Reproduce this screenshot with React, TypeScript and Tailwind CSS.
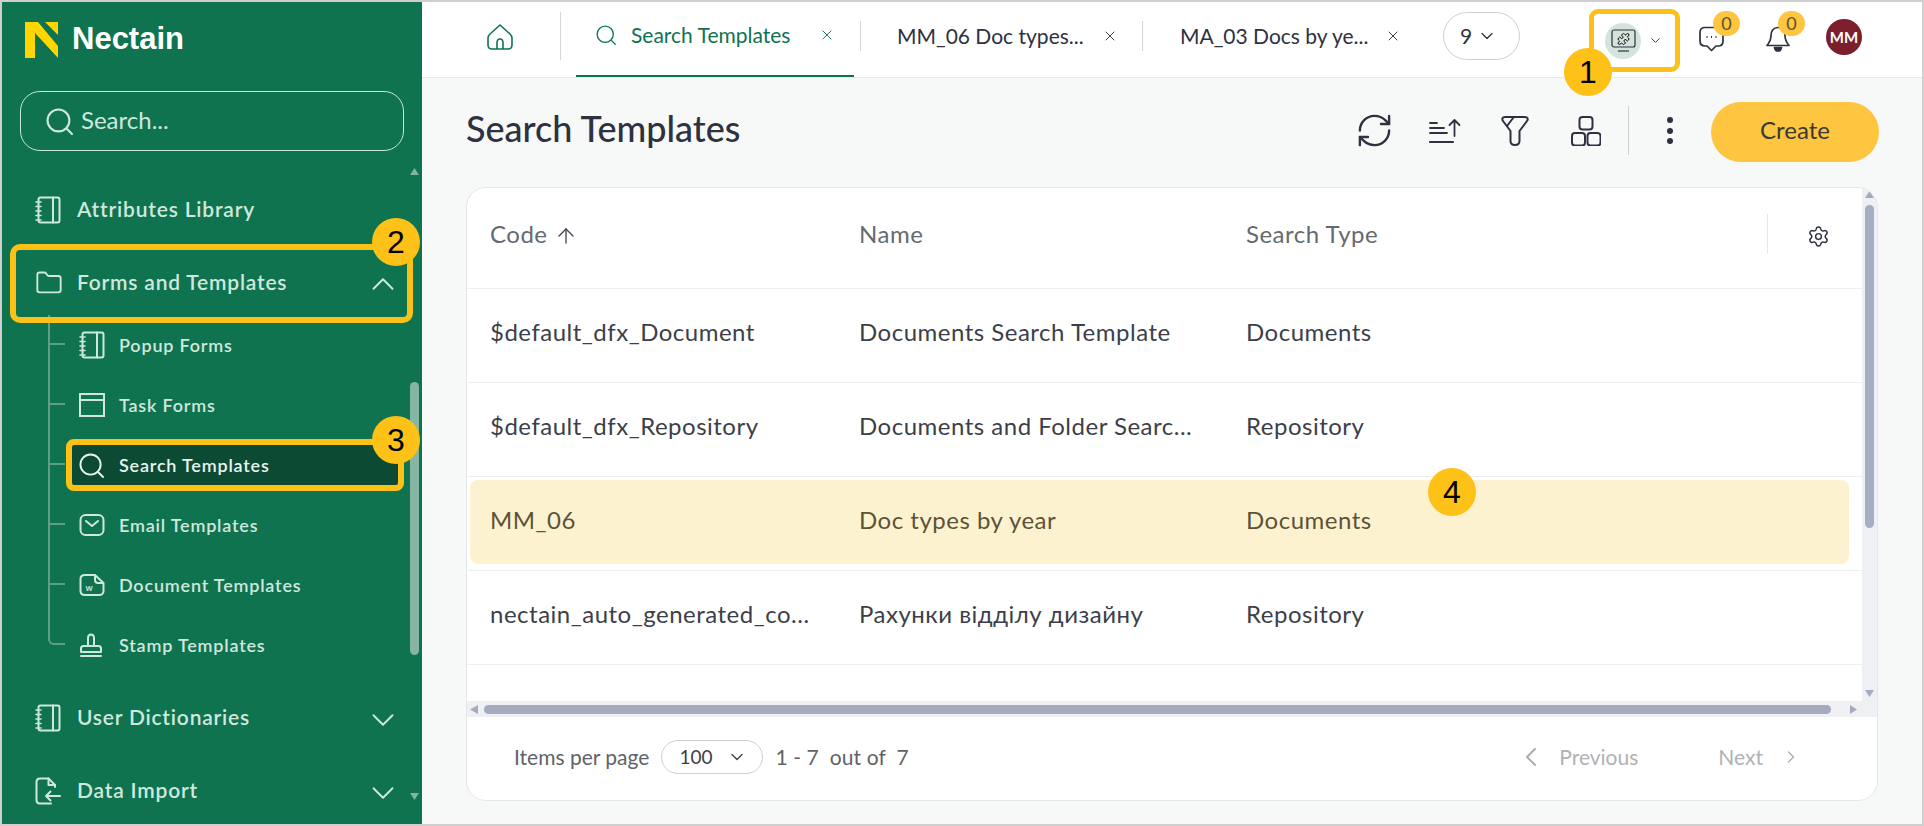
import React from "react";
import { RefreshCw, Settings, ChevronDown, ChevronUp, ChevronLeft, ChevronRight, X, Folder, Puzzle, ArrowUp } from "lucide-react";

const mint = "#cfe8de";

function Notebook() {
  return (
    <svg width="26" height="28" viewBox="0 0 26 28" fill="none" stroke={mint} strokeWidth="2" strokeLinejoin="round" strokeLinecap="round">
      <rect x="3.5" y="1.5" width="21" height="25" rx="2" />
      <path d="M18 1.5V26.5" />
      <path d="M1 6H6M1 10.5H6M1 15H6M1 19.5H6M1 24H6" strokeWidth="1.6" />
    </svg>
  );
}
function TaskForm() {
  return (
    <svg width="26" height="24" viewBox="0 0 26 24" fill="none" stroke={mint} strokeWidth="2">
      <rect x="1" y="1" width="24" height="22" />
      <path d="M1 7H25" />
    </svg>
  );
}
function Mail() {
  return (
    <svg width="26" height="24" viewBox="0 0 26 24" fill="none" stroke={mint} strokeWidth="2" strokeLinecap="round" strokeLinejoin="round">
      <rect x="1.5" y="2" width="23" height="20" rx="5" />
      <path d="M7 8L13 13L19 8" />
    </svg>
  );
}
function DocW() {
  return (
    <svg width="26" height="24" viewBox="0 0 26 24" fill="none" stroke={mint} strokeWidth="2" strokeLinejoin="round">
      <path d="M6 2H16L24.5 10V18C24.5 20.5 22.5 22 20.5 22H6C3.5 22 1.5 20.5 1.5 18V6C1.5 3.5 3.5 2 6 2Z" />
      <path d="M16 2V7C16 9 17.5 10 19 10H24.5" />
      <text x="6.5" y="18" fontSize="9" fontWeight="700" fill={mint} stroke="none" fontFamily="Lato, sans-serif">w</text>
    </svg>
  );
}
function Stamp() {
  return (
    <svg width="24" height="24" viewBox="0 0 24 24" fill="none" stroke={mint} strokeWidth="2" strokeLinejoin="round" strokeLinecap="round">
      <path d="M9 13V5C9 2.5 10.5 1.5 12 1.5C13.5 1.5 15 2.5 15 5V13" />
      <path d="M2 19V15.5C2 14 3 13 4.5 13H19.5C21 13 22 14 22 15.5V19Z" />
      <path d="M2 23H22" />
    </svg>
  );
}
function Import() {
  return (
    <svg width="26" height="28" viewBox="0 0 26 28" fill="none" stroke={mint} strokeWidth="2" strokeLinejoin="round" strokeLinecap="round">
      <path d="M20 10V8L13.5 1.5H5C3 1.5 1.5 3 1.5 5V23C1.5 25 3 26.5 5 26.5H16" />
      <path d="M13.5 1.5V8H20" />
      <path d="M25 19H11M15.5 14.5L11 19L15.5 23.5" />
    </svg>
  );
}
function MagnifierThin({ color, size, w = 2 }: { color: string; size: number; w?: number }) {
  return (
    <svg width={size} height={size} viewBox="0 0 26 26" fill="none" stroke={color} strokeWidth={w} strokeLinecap="round">
      <circle cx="12" cy="12" r="10.5" />
      <path d="M20 20L25 25" />
    </svg>
  );
}

function NavRow({ icon, label, mt, chevron }: { icon: React.ReactNode; label: string; mt: string; chevron?: "up" | "down" }) {
  return (
    <div className={`relative flex h-[60px] items-center pl-[33px] ${mt}`}>
      <div className="flex w-[42px] justify-start">{icon}</div>
      <span className="pb-[2px] text-[21px] font-semibold tracking-[0.8px] text-[#cfe8de]">{label}</span>
      {chevron === "up" && <ChevronUp className="absolute left-[362px] top-[12px]" size={38} strokeWidth={1.2} color={mint} />}
      {chevron === "down" && <ChevronDown className="absolute left-[362px] top-[13px]" size={38} strokeWidth={1.2} color={mint} />}
    </div>
  );
}

function Child({ icon, label, last, active }: { icon: React.ReactNode; label: string; last?: boolean; active?: boolean }) {
  return (
    <div className="relative flex h-[60px] items-center pl-[77px]">
      <span className={`absolute left-[46px] top-0 h-[30px] w-[17px] border-b-2 border-l-2 border-[#5f9f88] ${last ? "rounded-bl-[6px]" : ""}`} />
      {!last && <span className="absolute left-[46px] top-[29px] h-[31px] border-l-2 border-[#5f9f88]" />}
      {active && (
        <span className="absolute left-[64px] top-[4px] h-[52px] w-[338px] rounded-[8px] border-[6px] border-[#fbc117] bg-[#0c4a33]" />
      )}
      <div className="relative flex w-[40px] justify-start">{icon}</div>
      <span className={`relative text-[18px] font-semibold tracking-[0.8px] ${active ? "text-[#e8f5ef]" : "text-[#cfe8de]"}`}>{label}</span>
    </div>
  );
}

function Sidebar() {
  return (
    <aside className="relative flex h-full w-[420px] shrink-0 flex-col bg-[#0f7350]">
      <div className="flex items-center pl-[23px] pt-[19px]">
        <svg width="33" height="36" viewBox="0 0 33 36" fill="#ffd600">
          <path d="M0 0H13L33 24V36L10 11V36H0Z" />
          <path d="M20 0H33V13Z" />
        </svg>
        <span className="ml-[14px] pb-[2px] font-['Liberation_Sans'] text-[31px] font-bold leading-[36px] text-white">Nectain</span>
      </div>
      <div className="ml-[18px] mt-[32px] flex h-[60px] w-[384px] items-center rounded-[20px] border border-[#c5e8dc] pl-[25px]">
        <MagnifierThin color={mint} size={27} />
        <span className="ml-[8px] pb-[3px] text-[24px] text-[#cfe8de]">Search...</span>
      </div>
      <NavRow icon={<Notebook />} label="Attributes Library" mt="mt-[29px]" />
      <NavRow icon={<Folder size={28} strokeWidth={1.6} color={mint} />} label="Forms and Templates" mt="mt-[13px]" chevron="up" />
      <div className="relative mt-[2px]">
        <Child icon={<Notebook />} label="Popup Forms" />
        <Child icon={<TaskForm />} label="Task Forms" />
        <Child icon={<MagnifierThin color="#e8f5ef" size={25} />} label="Search Templates" active />
        <Child icon={<Mail />} label="Email Templates" />
        <Child icon={<DocW />} label="Document Templates" />
        <Child icon={<Stamp />} label="Stamp Templates" last />
      </div>
      <NavRow icon={<Notebook />} label="User Dictionaries" mt="mt-[13px]" chevron="down" />
      <NavRow icon={<Import />} label="Data Import" mt="mt-[13px]" chevron="down" />

      <span className="absolute left-[8px] top-[242px] h-[79px] w-[403px] rounded-[10px] border-[6px] border-[#fbc117]" />
      <svg className="absolute left-[408px] top-[166px]" width="9" height="7" viewBox="0 0 9 7" fill="#7fb5a3"><path d="M4.5 0L9 7H0Z" /></svg>
      <span className="absolute left-[408px] top-[380px] h-[273px] w-[9px] rounded-full bg-[#85b5a3]" />
      <svg className="absolute left-[408px] top-[791px]" width="9" height="7" viewBox="0 0 9 7" fill="#7fb5a3"><path d="M4.5 7L9 0H0Z" /></svg>
    </aside>
  );
}

function Divider({ cls }: { cls: string }) {
  return <span className={`w-px shrink-0 bg-[#d4d6d8] ${cls}`} />;
}

function CountBadge({ cls }: { cls: string }) {
  return (
    <span className={`absolute flex h-[25px] w-[27px] items-center justify-center rounded-full bg-[#fec540] text-[18px] text-[#5a5230] ${cls}`}>0</span>
  );
}

function TopBar() {
  return (
    <header className="flex h-[76px] shrink-0 items-center border-b border-[#e8e9ea] bg-white pb-[7px]">
      <svg className="ml-[65px] mt-[2px] shrink-0" width="26" height="26" viewBox="0 0 26 26" fill="none" stroke="#0f7350" strokeWidth="1.6" strokeLinejoin="round">
        <path d="M3 10L13 1L23 10C24.5 11.5 25 12.5 25 14V21C25 23.5 23.5 25 21 25H5C2.5 25 1 23.5 1 21V14C1 12.5 1.5 11.5 3 10Z" />
        <path d="M10 25V19C10 16.5 11 15 13 15C15 15 16 16.5 16 19V25" />
      </svg>
      <Divider cls="ml-[47px] h-[48px]" />
      <div className="-mb-[7px] ml-[15px] flex w-[278px] shrink-0 items-center self-stretch border-b-2 border-[#0f7350] pb-[7px] pl-[20px]">
        <MagnifierThin color="#0f7350" size={20} w={1.7} />
        <span className="ml-[15px] w-[188px] whitespace-nowrap text-[21px] text-[#0f7350]">Search Templates</span>
        <X size={16} strokeWidth={1.4} color="#0f7350" />
      </div>
      <Divider cls="ml-[6px] h-[30px]" />
      <span className="ml-[36px] w-[205px] whitespace-nowrap text-[21px] text-[#2e3140]">MM_06 Doc types...</span>
      <X size={16} strokeWidth={1.4} color="#2e3140" />
      <Divider cls="ml-[24px] h-[30px]" />
      <span className="ml-[37px] w-[205px] whitespace-nowrap text-[21px] text-[#2e3140]">MA_03 Docs by ye...</span>
      <X size={16} strokeWidth={1.4} color="#2e3140" />
      <div className="ml-[42px] flex h-[48px] w-[77px] shrink-0 items-center rounded-full border border-[#cfd0d2] pl-[16px]">
        <span className="text-[21px] text-[#2e3140]">9</span>
        <ChevronDown className="ml-[5px]" size={20} strokeWidth={1.5} color="#2e3140" />
      </div>
      <div className="relative ml-[69px] mt-[7px] flex h-[63px] w-[91px] shrink-0 items-center self-start rounded-[9px] border-[5px] border-[#fbc117] pl-[11px]">
        <span className="flex h-[36px] w-[36px] items-center justify-center rounded-full bg-[#d5e3dd]">
          <svg width="25" height="25" viewBox="0 0 25 25" fill="none" stroke="#2e3140" strokeWidth="1.2">
            <rect x="1" y="2" width="23" height="17" rx="2" />
            <path d="M7 23H18" />
            <Puzzle x="6" y="4.5" width="13" height="13" strokeWidth={1.8} />
          </svg>
        </span>
        <ChevronDown className="ml-[7px]" size={15} strokeWidth={1.5} color="#2e3140" />
      </div>
      <div className="relative ml-[19px] mt-[4px] h-[25px] w-[25px] shrink-0">
        <svg width="25" height="26" viewBox="0 0 25 26" fill="none" stroke="#2e3140" strokeWidth="1.7" strokeLinejoin="round">
          <path d="M6 1.5H19C22 1.5 24 3.5 24 6.5V15C24 18 22 20 19 20H17L12.5 24.5L8 20H6C3 20 1 18 1 15V6.5C1 3.5 3 1.5 6 1.5Z" />
          <path d="M7.5 11H8.5M12 11H13M16.5 11H17.5" strokeWidth="1.8" />
        </svg>
        <CountBadge cls="left-[14px] top-[-15px]" />
      </div>
      <div className="relative ml-[42px] mt-[4px] h-[25px] w-[24px] shrink-0">
        <svg width="24" height="26" viewBox="0 0 24 26" fill="none" stroke="#2e3140" strokeWidth="1.7" strokeLinejoin="round">
          <path d="M12 1.5C7 1.5 5 5.5 5 9.5C5 14 3.5 16.5 1 19.5H23C20.5 16.5 19 14 19 9.5C19 5.5 17 1.5 12 1.5Z" />
          <path d="M8.5 21.5C9 24 10.5 25 12 25C13.5 25 15 24 15.5 21.5Z" fill="#2e3140" />
        </svg>
        <CountBadge cls="left-[12px] top-[-15px]" />
      </div>
      <span className="ml-[36px] mt-[2px] flex h-[36px] w-[36px] shrink-0 items-center justify-center rounded-full bg-[#7a1f2b] text-[15px] font-bold text-white">MM</span>
    </header>
  );
}

function Toolbar() {
  return (
    <div className="flex h-[109px] shrink-0 items-center pb-[2px] pl-[44px] pr-[43px]">
      <h1 className="mb-[7px] text-[36px] font-medium text-[#2e3140]">Search Templates</h1>
      <div className="ml-auto flex items-center">
        <div className="mb-[2px] flex items-center">
          <RefreshCw size={39} strokeWidth={1.45} color="#2e3140" />
          <svg className="ml-[35px]" width="32" height="26" viewBox="0 0 32 26" fill="none" stroke="#2e3140" strokeWidth="1.8" strokeLinecap="round" strokeLinejoin="round">
            <path d="M1 5H8M1 10H15M1 15H18" />
            <path d="M1 24H24" strokeWidth="2.2" />
            <path d="M25.5 18V2M20.5 7L25.5 2L30.5 7" />
          </svg>
          <svg className="ml-[40px]" width="28" height="30" viewBox="0 0 28 30" fill="none" stroke="#2e3140" strokeWidth="2" strokeLinejoin="round" strokeLinecap="round">
            <path d="M4 1H24C26.5 1 27.5 3 26 5L18.5 15V25C18.5 27.5 16.5 29 14 29C11.5 29 9.5 27.5 9.5 25V15L2 5C0.5 3 1.5 1 4 1Z" />
            <path d="M12.5 1.5L6 10" />
          </svg>
          <svg className="ml-[42px]" width="30" height="30" viewBox="0 0 30 30" fill="none" stroke="#2e3140" strokeWidth="2">
            <rect x="8.5" y="1" width="13" height="12.5" rx="3" />
            <rect x="1" y="17" width="13" height="12.5" rx="3" />
            <rect x="16.5" y="17" width="13" height="12.5" rx="3" />
          </svg>
          <Divider cls="ml-[27px] h-[49px] !bg-[#cfd0d2]" />
          <div className="ml-[38px] flex flex-col gap-[4.5px]">
            <span className="h-[6px] w-[6px] rounded-full bg-[#2e3140]" />
            <span className="h-[6px] w-[6px] rounded-full bg-[#2e3140]" />
            <span className="h-[6px] w-[6px] rounded-full bg-[#2e3140]" />
          </div>
        </div>
        <button className="ml-[38px] flex h-[60px] w-[168px] items-center justify-center rounded-full bg-[#fec540] pb-[4px] text-[24px] text-[#3b3a30]">Create</button>
      </div>
    </div>
  );
}

function Row({ a, b, c, highlight }: { a: string; b: string; c: string; highlight?: boolean }) {
  if (highlight) {
    return (
      <div className="h-[94px] shrink-0 border-b border-[#eeeff1] pb-[6px] pl-[3px] pr-[13px] pt-[3px]">
        <div className="flex h-full items-center rounded-[8px] bg-[#fdf2d0] pb-[4px] pl-[20px] text-[24px] tracking-[0.5px] text-[#5d5236]">
          <span className="w-[369px]">{a}</span>
          <span className="w-[387px]">{b}</span>
          <span>{c}</span>
        </div>
      </div>
    );
  }
  return (
    <div className="flex h-[94px] shrink-0 items-center border-b border-[#eeeff1] pb-[8px] pl-[23px] text-[24px] tracking-[0.5px] text-[#3c3f49]">
      <span className="w-[369px] whitespace-nowrap">{a}</span>
      <span className="w-[387px] whitespace-nowrap">{b}</span>
      <span>{c}</span>
    </div>
  );
}

function Card() {
  return (
    <section className="ml-[44px] mr-[44px] flex h-[614px] flex-col overflow-hidden rounded-[20px] border border-[#e6e7e9] bg-white">
      <div className="flex h-[513px] shrink-0">
        <div className="flex flex-1 flex-col overflow-hidden">
          <div className="flex h-[101px] shrink-0 items-center border-b border-[#eeeff1] pl-[23px] text-[24px] tracking-[0.5px] text-[#666a70]">
            <span className="flex w-[369px] items-center pb-[8px]">Code<ArrowUp className="ml-[6px] mt-[4px]" size={24} strokeWidth={1.3} color="#3c3f49" /></span>
            <span className="w-[387px] pb-[8px]">Name</span>
            <span className="pb-[8px]">Search Type</span>
            <span className="mb-[8px] ml-auto h-[40px] w-px bg-[#e6e7e9]" />
            <Settings className="mb-[3px] ml-[39px] mr-[32px]" size={23} strokeWidth={1.5} color="#2e3140" />
          </div>
          <Row a="$default_dfx_Document" b="Documents Search Template" c="Documents" />
          <Row a="$default_dfx_Repository" b="Documents and Folder Searc..." c="Repository" />
          <Row a="MM_06" b="Doc types by year" c="Documents" highlight />
          <Row a="nectain_auto_generated_co..." b="Рахунки відділу дизайну" c="Repository" />
        </div>
        <div className="flex h-full w-[15px] shrink-0 flex-col items-center bg-[#eef0f4]">
          <svg className="mt-[3px]" width="9" height="7" viewBox="0 0 9 7" fill="#a5aabf"><path d="M4.5 0L9 7H0Z" /></svg>
          <span className="mt-[7px] h-[323px] w-[9px] rounded-full bg-[#a5aec4]" />
          <svg className="mb-[4px] mt-auto" width="9" height="7" viewBox="0 0 9 7" fill="#a5aabf"><path d="M4.5 7L9 0H0Z" /></svg>
        </div>
      </div>
      <div className="flex h-[16px] shrink-0 items-center bg-[#eef0f4] pl-[3px]">
        <svg width="8" height="9" viewBox="0 0 8 9" fill="#a5aabf"><path d="M0 4.5L8 0V9Z" /></svg>
        <span className="ml-[6px] h-[9px] w-[1347px] rounded-full bg-[#a5aabf]" />
        <svg className="ml-[19px]" width="7" height="9" viewBox="0 0 7 9" fill="#a5aabf"><path d="M7 4.5L0 0V9Z" /></svg>
      </div>
      <div className="flex flex-1 items-center pb-[3px] pl-[47px] text-[21px] text-[#5f6368]">
        <span>Items per page</span>
        <div className="ml-[12px] flex h-[34px] w-[102px] shrink-0 items-center rounded-full border border-[#cfd0d2] pl-[17px] text-[19px] text-[#3c3f49]">
          <span>100</span>
          <ChevronDown className="ml-[15px]" size={20} strokeWidth={1.5} color="#3c3f49" />
        </div>
        <span className="ml-[12px] whitespace-pre tracking-[0.1px]">1 - 7  out of  7</span>
        <div className="ml-auto flex items-center pr-[76px] text-[#b0b2b4]">
          <ChevronLeft size={32} strokeWidth={1.4} color="#a9abad" />
          <span className="ml-[12px]">Previous</span>
          <span className="ml-[80px]">Next</span>
          <ChevronRight className="ml-[18px]" size={20} strokeWidth={1.5} color="#a9abad" />
        </div>
      </div>
    </section>
  );
}

function Marker({ n, cls }: { n: number; cls: string }) {
  return (
    <span className={`absolute flex h-[48px] w-[48px] items-center justify-center rounded-full bg-[#fec117] font-['Liberation_Sans'] text-[32px] text-black ${cls}`}>{n}</span>
  );
}

export default function App() {
  return (
    <div className="relative flex h-[826px] w-[1924px] overflow-hidden border-2 border-[#cfcfcf] bg-[#f7f8f8] font-['Lato',sans-serif]">
      <Sidebar />
      <main className="flex min-w-0 flex-1 flex-col">
        <TopBar />
        <Toolbar />
        <Card />
      </main>
      <Marker n={1} cls="left-[1562px] top-[46px]" />
      <Marker n={2} cls="left-[370px] top-[216px]" />
      <Marker n={3} cls="left-[370px] top-[414px]" />
      <Marker n={4} cls="left-[1426px] top-[466px]" />
    </div>
  );
}
